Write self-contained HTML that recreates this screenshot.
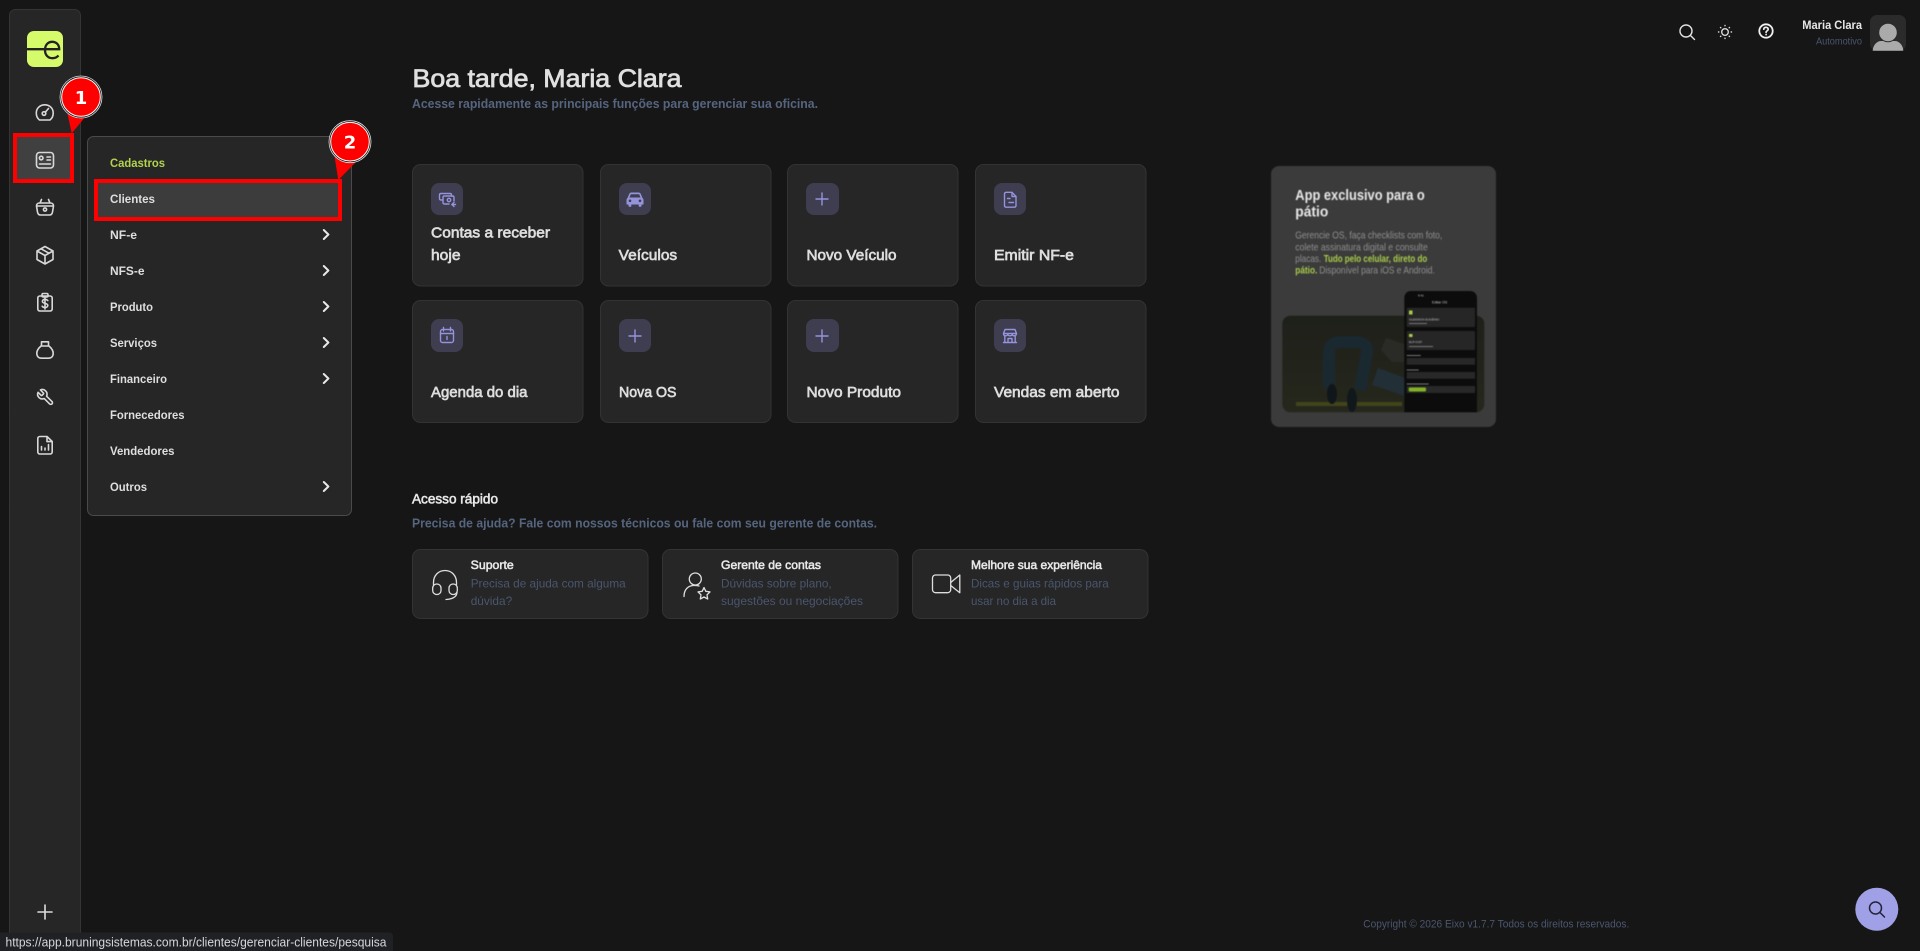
<!DOCTYPE html>
<html lang="pt-BR">
<head>
<meta charset="utf-8">
<title>Eixo</title>
<style>
html,body{margin:0;padding:0;background:#161616;width:1920px;height:951px;overflow:hidden}
svg{display:block;position:absolute;left:0;top:0}
text{font-family:"Liberation Sans",sans-serif;white-space:pre}
.m{font-size:12px;font-weight:700;fill:#dedede}
.l{font-size:14.5px;fill:#dedede;stroke:#dedede;stroke-width:.65}
.s{font-size:12.5px;font-weight:700;fill:#56657f}
.qt{font-size:12px;fill:#e8e8e8;stroke:#e8e8e8;stroke-width:.55}
.qd{font-size:12px;fill:#4a566e}
.card{fill:#262626;stroke:#333;stroke-width:1}
.ib{fill:#3f3d50}
.ic{fill:none;stroke:#9593da;stroke-width:1.4;stroke-linecap:round;stroke-linejoin:round}
.n{fill:none;stroke:#d8d8d8;stroke-width:1.6;stroke-linecap:round;stroke-linejoin:round}
.q{fill:none;stroke:#dedede;stroke-width:1.3;stroke-linecap:round;stroke-linejoin:round}
.ch{fill:none;stroke:#e8e8e8;stroke-width:2;stroke-linecap:round;stroke-linejoin:round}
.rb{fill:none;stroke:#f00;stroke-width:4}
.num{font-family:"DejaVu Sans",sans-serif;font-size:18px;font-weight:700;fill:#fff;text-anchor:middle}
.ab{font-size:10.3px;fill:#8f8f8f}
.tiny{font-size:3.5px;fill:#c8c8c8}
</style>
</head>
<body>
<svg width="1920" height="951" viewBox="0 0 1920 951" xmlns="http://www.w3.org/2000/svg">
<defs>
<linearGradient id="floor" x1="0" y1="0" x2="0" y2="1">
<stop offset="0" stop-color="#1e201a"/><stop offset="1" stop-color="#26281d"/>
</linearGradient>
</defs>
<rect width="1920" height="951" fill="#161616"/>

<!-- sidebar -->
<rect x="9.5" y="9.5" width="71" height="960" rx="6" fill="#262626" stroke="#353535"/>
<rect x="27" y="31" width="36" height="36" rx="7" fill="#d6fb6a"/>
<path d="M27 49.200H59.200C59.200 44.500 56 41.800 52.200 41.800C48 41.800 45 45 45 50C45 55 48 58.200 52.500 58.200C55 58.200 57 57.200 58.500 55.500" fill="none" stroke="#232323" stroke-width="2.300"/>

<!-- nav icons -->
<rect x="17" y="137" width="53" height="42" fill="#404040"/>
<g class="n">
<path d="M39.500 120C37.500 118.500 36.300 116 36.300 113C36.300 108.200 40.200 104.800 44.800 104.800C49.400 104.800 53.200 108.200 53.200 113C53.200 116 52 118.500 50 120Z"/>
<circle cx="44" cy="113.500" r="1.800"/><path d="M45.500 112L48.500 108.500"/>
<rect x="36.500" y="152.500" width="17" height="15.500" rx="3"/>
<circle cx="41.200" cy="158" r="1.800"/><path d="M47 157H50.500M47 160H50.500M39.500 164H50.500"/>
<path d="M36.500 206H53.500L52.500 212C52.200 214 51 215 49.500 215H40.500C39 215 37.800 214 37.500 212ZM36.500 206C36.500 204 38 203 39.500 203H50.500C52 203 53.500 204 53.500 206M40 203L41.500 199.500M50 203L48.500 199.500"/>
<circle cx="45" cy="209.500" r="1.600"/>
<path d="M45 246.500L53 251V259.500L45 264L37 259.500V251ZM37 251L45 255.500L53 251M45 255.500V264M41 248.800L49 253.200"/>
<rect x="37.800" y="296" width="14.400" height="15" rx="2"/>
<rect x="42" y="293.500" width="6" height="3.500" rx="1.200"/>
<path d="M47.800 300.500C47 299.600 46 299.300 45 299.300C43.500 299.300 42.400 300.100 42.400 301.400C42.400 304 47.800 302.800 47.800 305.400C47.800 306.700 46.500 307.500 45 307.500C44 307.500 42.900 307.100 42.200 306.200M45 298V309"/>
<path d="M41.500 346V341.800H48.500V346M41 346H49C51.300 348 53.200 350.300 53.200 353.300C53.200 356.600 51.300 358.200 48.500 358.200H41.500C38.700 358.200 36.800 356.600 36.800 353.300C36.800 350.300 38.700 348 41 346Z"/>
<path transform="translate(54.800,388) scale(-.78,.78)" stroke-width="2.050" d="M14.700 6.300a1 1 0 0 0 0 1.400l1.600 1.600a1 1 0 0 0 1.400 0l3.770-3.770a6 6 0 0 1-7.940 7.940l-6.910 6.910a2.120 2.120 0 0 1-3-3l6.910-6.910a6 6 0 0 1 7.940-7.940l-3.760 3.760z"/>
<path d="M37.800 438.500C37.800 437.300 38.700 436.500 39.800 436.500H47L52.200 441.500V452C52.200 453.200 51.300 454 50.200 454H39.800C38.700 454 37.800 453.200 37.800 452ZM47 436.800V441.600H52"/>
<path d="M41.500 450V446.500M45 450V448M48.500 450V444.500"/>
<path d="M38 912H52M45 905V919" stroke="#dcdcdc"/>
</g>
<rect class="rb" x="15" y="135" width="57" height="46"/>

<!-- menu -->
<rect x="87.500" y="136.500" width="264" height="379" rx="6" fill="#262626" stroke="#4a4a4a"/>
<rect x="96" y="181" width="244" height="38" fill="#3c3c3c"/>
<text class="m" x="110" y="167" textLength="55" lengthAdjust="spacingAndGlyphs" style="fill:#b3d24f">Cadastros</text>
<text class="m" x="110" y="203" textLength="45" lengthAdjust="spacingAndGlyphs">Clientes</text>
<text class="m" x="110" y="239" textLength="27" lengthAdjust="spacingAndGlyphs">NF-e</text>
<text class="m" x="110" y="275" textLength="34.500" lengthAdjust="spacingAndGlyphs">NFS-e</text>
<text class="m" x="110" y="311" textLength="43" lengthAdjust="spacingAndGlyphs">Produto</text>
<text class="m" x="110" y="347" textLength="47" lengthAdjust="spacingAndGlyphs">Serviços</text>
<text class="m" x="110" y="383" textLength="57" lengthAdjust="spacingAndGlyphs">Financeiro</text>
<text class="m" x="110" y="419" textLength="74.500" lengthAdjust="spacingAndGlyphs">Fornecedores</text>
<text class="m" x="110" y="455" textLength="64.500" lengthAdjust="spacingAndGlyphs">Vendedores</text>
<text class="m" x="110" y="491" textLength="37" lengthAdjust="spacingAndGlyphs">Outros</text>
<g class="ch">
<path d="M323.800 230L328.400 234.500L323.800 239"/>
<path d="M323.800 266L328.400 270.500L323.800 275"/>
<path d="M323.800 302L328.400 306.500L323.800 311"/>
<path d="M323.800 338L328.400 342.500L323.800 347"/>
<path d="M323.800 374L328.400 378.500L323.800 383"/>
<path d="M323.800 482L328.400 486.500L323.800 491"/>
</g>
<rect class="rb" x="96" y="181" width="244" height="38"/>

<!-- badges -->
<path d="M67.300 113L85 117.300L71.700 133.300Z" fill="#f00"/>
<circle cx="81" cy="97" r="21" fill="#161616" stroke="#ddd" stroke-width=".8"/>
<circle cx="81" cy="97" r="19.300" fill="#f00" stroke="#fff" stroke-width="1"/>
<text class="num" x="81" y="104">1</text>
<path d="M334.300 155L355.700 162.300L338.300 180Z" fill="#f00"/>
<circle cx="350" cy="141.700" r="21" fill="#161616" stroke="#ddd" stroke-width=".8"/>
<circle cx="350" cy="141.700" r="19.300" fill="#f00" stroke="#fff" stroke-width="1"/>
<text class="num" x="350" y="148.500">2</text>

<!-- heading -->
<text x="412.500" y="87" font-size="25" fill="#e0e0e0" stroke="#e0e0e0" stroke-width=".75" textLength="269" lengthAdjust="spacingAndGlyphs">Boa tarde, Maria Clara</text>
<text class="s" x="412" y="108" textLength="406" lengthAdjust="spacingAndGlyphs">Acesse rapidamente as principais funções para gerenciar sua oficina.</text>

<!-- cards row 1 -->
<rect class="card" x="412.500" y="164.500" width="170.500" height="121.500" rx="8"/>
<rect class="card" x="600.500" y="164.500" width="170.500" height="121.500" rx="8"/>
<rect class="card" x="787.500" y="164.500" width="170.500" height="121.500" rx="8"/>
<rect class="card" x="975.500" y="164.500" width="170.500" height="121.500" rx="8"/>
<!-- cards row 2 -->
<rect class="card" x="412.500" y="300.500" width="170.500" height="122" rx="8"/>
<rect class="card" x="600.500" y="300.500" width="170.500" height="122" rx="8"/>
<rect class="card" x="787.500" y="300.500" width="170.500" height="122" rx="8"/>
<rect class="card" x="975.500" y="300.500" width="170.500" height="122" rx="8"/>

<rect class="ib" x="431" y="183" width="32" height="32" rx="8"/>
<rect class="ib" x="619" y="183" width="32" height="32" rx="8"/>
<rect class="ib" x="806" y="183" width="33" height="32" rx="8"/>
<rect class="ib" x="994" y="183" width="32" height="32" rx="8"/>
<rect class="ib" x="431" y="319" width="32" height="33" rx="8"/>
<rect class="ib" x="619" y="319" width="32" height="33" rx="8"/>
<rect class="ib" x="806" y="319" width="33" height="33" rx="8"/>
<rect class="ib" x="994" y="319" width="32" height="33" rx="8"/>

<g class="ic">
<path d="M443 200H441C440 200 439.500 199.500 439.500 198.500V195C439.500 194 440 193.500 441 193.500H450C451 193.500 451.500 194 451.500 195V196"/>
<path d="M445.500 196H452.500C453.500 196 454 196.500 454 197.500V201M449 204H444.500C443.500 204 443 203.500 443 202.500V197.500C443 196.500 443.500 196 444.500 196"/>
<circle cx="449" cy="200" r="1.700"/>
<path d="M452 204.500H455.500M454 202.500L451.800 204.500L454 206.500"/>
<path d="M1004.500 194C1004.500 193 1005.200 192.300 1006.200 192.300H1012L1016 196.500V205.500C1016 206.500 1015.300 207.200 1014.300 207.200H1006.200C1005.200 207.200 1004.500 206.500 1004.500 205.500Z"/>
<path d="M1012 192.500V196.500H1016M1007.500 198.500H1010M1009 202.500H1013.500"/>
<path d="M816 199H828M822 193V205"/>
<path d="M816 336H828M822 330V342"/>
<path d="M629 336H641M635 330V342"/>
<rect x="440.500" y="329.500" width="13" height="13" rx="2"/>
<path d="M440.500 333.500H453.500M443.500 327.500V331M450.500 327.500V331M447 336.500V339.500"/>
<path d="M1003.500 333.500L1005 329.500H1015L1016.500 333.500C1016.500 335 1015.500 335.800 1014.300 335.800C1013 335.800 1012.200 335 1012.200 334C1012.200 335 1011.200 335.800 1010 335.800C1008.800 335.800 1007.800 335 1007.800 334C1007.800 335 1007 335.800 1005.800 335.800C1004.500 335.800 1003.500 335 1003.500 333.500ZM1003.500 333.500H1016.500"/>
<path d="M1004.800 335.800V342.500H1015.200V335.800M1003.500 342.500H1016.500M1008 342.500V338.500H1012V342.500"/>
</g>
<path d="M627.500 198L629.300 193.800C629.700 193 630.300 192.500 631.300 192.500H638.700C639.700 192.500 640.300 193 640.700 193.800L642.500 198C643 198.400 643.500 199 643.500 200V204.500H641.500V206C641.500 206.500 641 206.800 640.500 206.800H639.500C639 206.800 638.700 206.500 638.700 206V204.500H631.300V206C631.300 206.500 631 206.800 630.500 206.800H629.500C629 206.800 628.500 206.500 628.500 206V204.500H626.500V200C626.500 199 627 198.400 627.500 198Z" fill="#9593da"/>
<path d="M629.500 197.500L630.800 194.300H639.200L640.500 197.500Z" fill="#3f3d50"/>
<circle cx="630" cy="200.800" r="1.300" fill="#3f3d50"/><circle cx="640" cy="200.800" r="1.300" fill="#3f3d50"/>

<text class="l" x="431" y="237.500" textLength="119" lengthAdjust="spacingAndGlyphs">Contas a receber</text>
<text class="l" x="431" y="260" textLength="29.500" lengthAdjust="spacingAndGlyphs">hoje</text>
<text class="l" x="618.700" y="260" textLength="58.500" lengthAdjust="spacingAndGlyphs">Veículos</text>
<text class="l" x="806.500" y="260" textLength="90" lengthAdjust="spacingAndGlyphs">Novo Veículo</text>
<text class="l" x="994" y="260" textLength="80" lengthAdjust="spacingAndGlyphs">Emitir NF-e</text>
<text class="l" x="431" y="397" textLength="96.500" lengthAdjust="spacingAndGlyphs">Agenda do dia</text>
<text class="l" x="619" y="397" textLength="57.500" lengthAdjust="spacingAndGlyphs">Nova OS</text>
<text class="l" x="806.500" y="397" textLength="94.500" lengthAdjust="spacingAndGlyphs">Novo Produto</text>
<text class="l" x="994" y="397" textLength="125.500" lengthAdjust="spacingAndGlyphs">Vendas em aberto</text>

<!-- acesso rapido -->
<text x="412" y="503.500" font-size="13.500" fill="#e8e8e8" stroke="#e8e8e8" stroke-width=".55" textLength="86" lengthAdjust="spacingAndGlyphs">Acesso rápido</text>
<text class="s" x="412" y="527.500" textLength="465" lengthAdjust="spacingAndGlyphs">Precisa de ajuda? Fale com nossos técnicos ou fale com seu gerente de contas.</text>

<rect class="card" x="412.500" y="549.500" width="235.500" height="69" rx="8"/>
<rect class="card" x="662.500" y="549.500" width="235.500" height="69" rx="8"/>
<rect class="card" x="912.500" y="549.500" width="235.500" height="69" rx="8"/>

<g class="q">
<path d="M433.500 585V582.500C433.500 575.500 438.500 570.500 445 570.500C451.500 570.500 456.500 575.500 456.500 582.500V585"/>
<rect x="432.700" y="584" width="8.300" height="10.500" rx="4"/>
<rect x="449" y="584" width="8.300" height="10.500" rx="4"/>
<path d="M457 592C457 596.500 453 599 446 599.500"/>
<circle cx="695.300" cy="579" r="6"/>
<path d="M684 596.500C684 589.500 688 586 693 585.500C695.500 585.300 697.500 585.500 699 586"/>
<path d="M704 587.500L705.800 591.300L710 591.900L707 594.800L707.700 599L704 597L700.300 599L701 594.800L698 591.900L702.200 591.300Z"/>
<rect x="932.500" y="575" width="18.200" height="17.700" rx="3"/>
<path d="M950.700 582.500L959.800 575V592.700L950.700 585.500"/>
</g>

<text class="qt" x="470.700" y="569" textLength="43" lengthAdjust="spacingAndGlyphs">Suporte</text>
<text class="qd" x="470.700" y="587.300" textLength="155" lengthAdjust="spacingAndGlyphs">Precisa de ajuda com alguma</text>
<text class="qd" x="470.700" y="605" textLength="41.500" lengthAdjust="spacingAndGlyphs">dúvida?</text>
<text class="qt" x="721" y="569" textLength="100" lengthAdjust="spacingAndGlyphs">Gerente de contas</text>
<text class="qd" x="721" y="587.300" textLength="110.700" lengthAdjust="spacingAndGlyphs">Dúvidas sobre plano,</text>
<text class="qd" x="721" y="605" textLength="142" lengthAdjust="spacingAndGlyphs">sugestões ou negociações</text>
<text class="qt" x="971" y="569" textLength="131" lengthAdjust="spacingAndGlyphs">Melhore sua experiência</text>
<text class="qd" x="971" y="587.300" textLength="137.700" lengthAdjust="spacingAndGlyphs">Dicas e guias rápidos para</text>
<text class="qd" x="971" y="605" textLength="85" lengthAdjust="spacingAndGlyphs">usar no dia a dia</text>

<!-- app promo -->
<g style="filter:blur(.4px)">
<rect x="1271" y="166" width="225" height="261" rx="8" fill="#3b3b3b"/>
<text x="1295.300" y="200" font-size="14.500" font-weight="700" fill="#e8e8e8" textLength="129.500" lengthAdjust="spacingAndGlyphs">App exclusivo para o</text>
<text x="1295.300" y="216.700" font-size="14.500" font-weight="700" fill="#e8e8e8" textLength="33" lengthAdjust="spacingAndGlyphs">pátio</text>
<text class="ab" x="1295.300" y="238.700" textLength="147" lengthAdjust="spacingAndGlyphs">Gerencie OS, faça checklists com foto,</text>
<text class="ab" x="1295.300" y="250.300" textLength="132.500" lengthAdjust="spacingAndGlyphs">colete assinatura digital e consulte</text>
<text class="ab" x="1295.300" y="262" textLength="26" lengthAdjust="spacingAndGlyphs">placas.</text>
<text class="ab" x="1323.700" y="262" textLength="103.500" lengthAdjust="spacingAndGlyphs" style="fill:#a9cc4a;font-weight:700">Tudo pelo celular, direto do</text>
<text class="ab" x="1295.300" y="273.500" textLength="22" lengthAdjust="spacingAndGlyphs" style="fill:#a9cc4a;font-weight:700">pátio.</text>
<text class="ab" x="1319.300" y="273.500" textLength="115.500" lengthAdjust="spacingAndGlyphs">Disponível para iOS e Android.</text>

<!-- photo -->
<rect x="1282.300" y="315.700" width="202" height="96.600" rx="8" fill="url(#floor)"/>
<path d="M1296 404H1402" stroke="#42451a" stroke-width="4"/>
<path d="M1329 388V352C1329 345 1334 342 1341 342H1356C1365 342 1368 347 1367 353L1360 390" fill="none" stroke="#1a2830" stroke-width="12"/>
<ellipse cx="1332" cy="394" rx="5" ry="10" fill="#10161a"/>
<ellipse cx="1352" cy="400" rx="5" ry="12" fill="#10181b"/>
<path d="M1378 368L1405 378V396L1372 385Z" fill="#222f36"/>
<path d="M1386 338L1404 344V362L1392 362L1381 350Z" fill="#2a2b26"/>
<!-- phone -->
<path d="M1404.300 412.300V298C1404.300 294 1407 291 1411 291H1470C1474 291 1477 294 1477 298V412.300Z" fill="#0c0c0c"/>
<text class="tiny" x="1418" y="296.500" style="font-size:3px">9:41</text>
<text class="tiny" x="1432" y="303.500">Editar OS</text>
<rect x="1406.700" y="307.700" width="68.300" height="19.300" rx="1" fill="#262626"/>
<rect x="1406.700" y="331" width="68.300" height="19" rx="1" fill="#262626"/>
<rect x="1409" y="310.500" width="3.500" height="4" fill="#a9cc4a"/>
<rect x="1409" y="334" width="3.500" height="3" fill="#a9cc4a"/>
<text class="tiny" x="1409" y="320.500" style="font-size:3px">GLEIDSON EUGÊNIO</text>
<text class="tiny" x="1409" y="343" style="font-size:3px">ELP-0J37</text>
<rect x="1409" y="323" width="18" height="1" fill="#777"/>
<rect x="1409" y="346" width="24" height="1" fill="#777"/>
<rect x="1406.700" y="355" width="14" height="1" fill="#777"/>
<rect x="1406.700" y="358" width="68.300" height="6.700" fill="#282828"/>
<rect x="1406.700" y="369.500" width="12" height="1" fill="#777"/>
<rect x="1406.700" y="372" width="68.300" height="6.700" fill="#282828"/>
<rect x="1406.700" y="383.500" width="22" height="1" fill="#777"/>
<rect x="1406.700" y="386" width="68.300" height="7" fill="#282828"/>
<rect x="1408.700" y="387.500" width="17.300" height="4" rx="1" fill="#83b324"/>
</g>

<!-- top bar -->
<g fill="none" stroke="#e2e2e2" stroke-width="1.400" stroke-linecap="round">
<circle cx="1686" cy="31" r="6"/><path d="M1690.500 35.500L1694.500 39.500"/>
<circle cx="1725" cy="32" r="3.300" stroke="#d8d8d8"/>
<path d="M1725 25.500V25.800M1725 38.200V38.500M1718.500 32H1718.800M1731.200 32H1731.500M1720.500 27.500L1720.800 27.800M1729.200 36.200L1729.500 36.500M1720.500 36.500L1720.800 36.200M1729.200 27.800L1729.500 27.500" stroke="#d8d8d8"/>
<circle cx="1766" cy="31" r="6.700" stroke-width="1.800" stroke="#f0f0f0"/>
<path d="M1763.800 29.300C1763.800 28 1764.800 27.300 1766 27.300C1767.300 27.300 1768.200 28.200 1768.200 29.200C1768.200 30.700 1766.100 30.800 1766.100 32.400M1766.100 34.500V34.600" stroke-width="1.700" stroke="#f0f0f0"/>
</g>
<text x="1802.300" y="29" font-size="12" font-weight="700" fill="#e6e6e6" textLength="59.700" lengthAdjust="spacingAndGlyphs">Maria Clara</text>
<text x="1816" y="44.500" font-size="10.500" fill="#4a566e" textLength="46" lengthAdjust="spacingAndGlyphs">Automotivo</text>
<rect x="1870" y="15" width="36" height="36" rx="7" fill="#2b2b2b"/>
<path d="M1872.700 50.700C1873 45 1877 41 1881 41H1895C1899 41 1903 45 1903.300 50.700Z" fill="#aaa"/>
<circle cx="1888" cy="32.500" r="9.300" fill="#aaa" stroke="#2b2b2b" stroke-width="1"/>

<!-- footer -->
<text x="1363.300" y="927.500" font-size="10.800" fill="#4a566e" textLength="266" lengthAdjust="spacingAndGlyphs">Copyright © 2026 Eixo v1.7.7 Todos os direitos reservados.</text>
<circle cx="1876.800" cy="909.300" r="21.500" fill="#a0a0e6"/>
<circle cx="1875.500" cy="908" r="6" fill="none" stroke="#23233a" stroke-width="1.500"/>
<path d="M1880 912.500L1884.500 917" stroke="#23233a" stroke-width="1.500" stroke-linecap="round"/>

<!-- status bubble -->
<path d="M0 932.500H389C391.500 932.500 393 934 393 936.500V951H0Z" fill="#1f2124"/>
<text x="5.500" y="946.700" font-size="12.500" fill="#d4d7dc" textLength="381" lengthAdjust="spacingAndGlyphs">https://app.bruningsistemas.com.br/clientes/gerenciar-clientes/pesquisa</text>
</svg>
</body>
</html>
